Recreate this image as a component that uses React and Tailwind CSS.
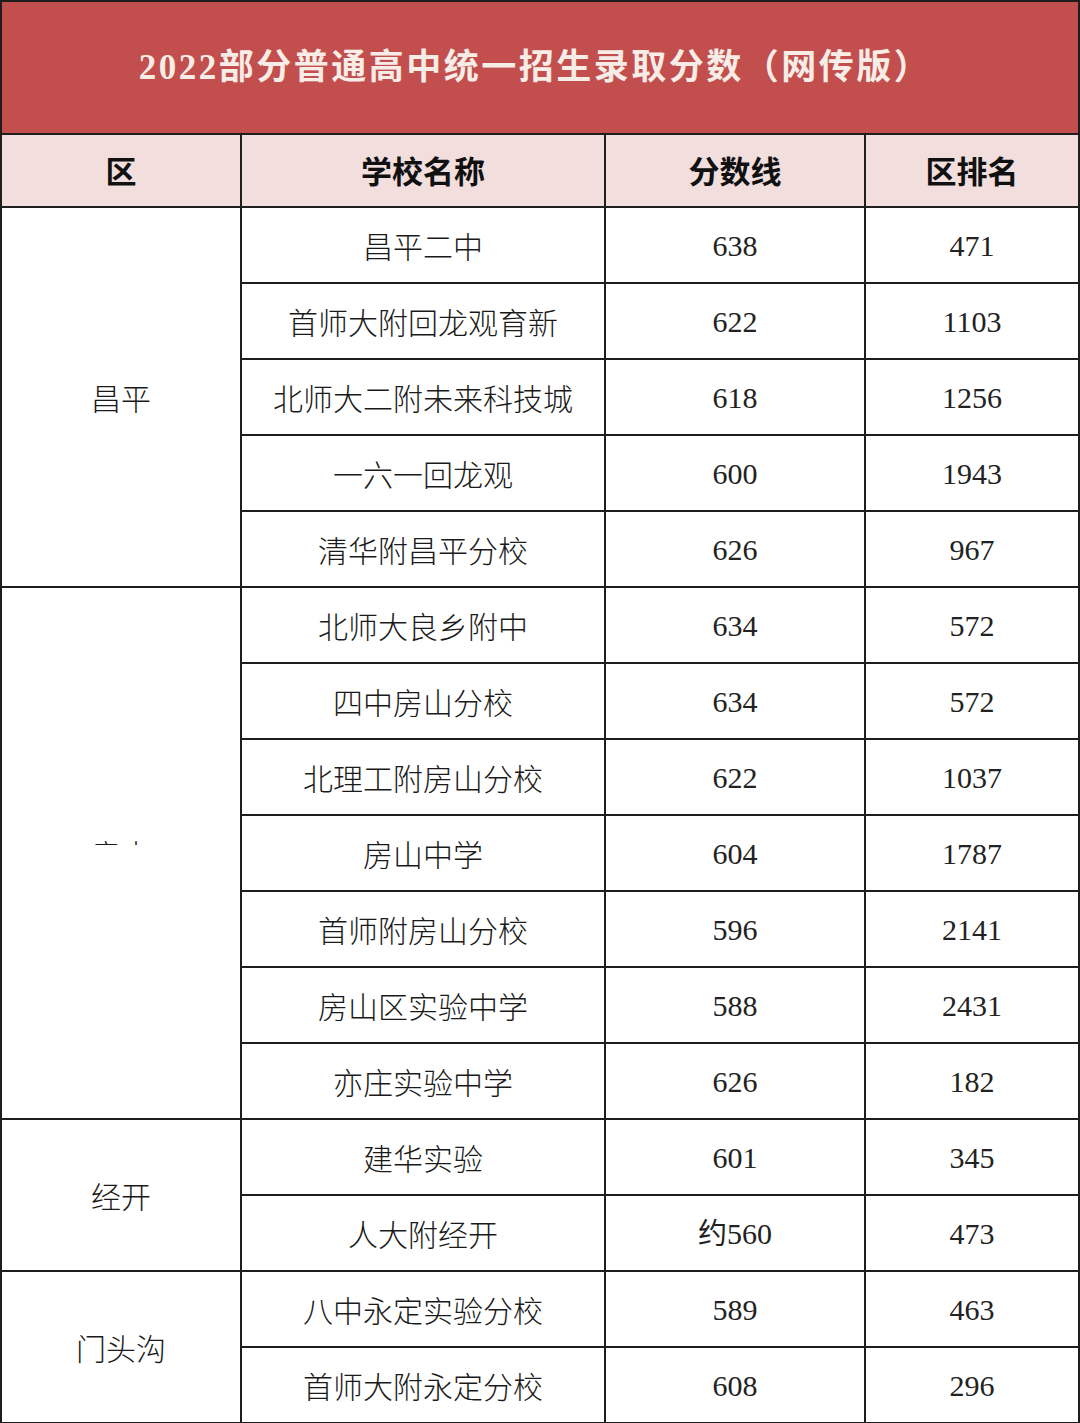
import React from 'react';

const groups = [
    {
        district: '昌平',
        rows: [
            ['昌平二中', '638', '471'],
            ['首师大附回龙观育新', '622', '1103'],
            ['北师大二附未来科技城', '618', '1256'],
            ['一六一回龙观', '600', '1943'],
            ['清华附昌平分校', '626', '967'],
        ],
    },
    {
        district: '房山',
        hidden: true,
        rows: [
            ['北师大良乡附中', '634', '572'],
            ['四中房山分校', '634', '572'],
            ['北理工附房山分校', '622', '1037'],
            ['房山中学', '604', '1787'],
            ['首师附房山分校', '596', '2141'],
            ['房山区实验中学', '588', '2431'],
            ['亦庄实验中学', '626', '182'],
        ],
    },
    {
        district: '经开',
        rows: [
            ['建华实验', '601', '345'],
            ['人大附经开', '约560', '473'],
        ],
    },
    {
        district: '门头沟',
        rows: [
            ['八中永定实验分校', '589', '463'],
            ['首师大附永定分校', '608', '296'],
        ],
    },
];

const cjk = { fontFamily: '"Noto Sans CJK SC", "Noto Sans", sans-serif' };
const num = { fontFamily: '"Liberation Serif", "Noto Sans CJK SC", serif' };

const cell = 'border-2 border-[#1e1e1e] text-center align-middle';

const App = () => {
    return (
        <div className="w-[1080px] h-[1423px] bg-white overflow-hidden">
            <table className="w-[1080px] table-fixed border-collapse">
                <colgroup>
                    <col className="w-[240px]" />
                    <col className="w-[364px]" />
                    <col className="w-[260px]" />
                    <col />
                </colgroup>
                <thead>
                    <tr className="h-[133px]">
                        <th colSpan={4} className={`${cell} bg-[#c24f4e] text-[#f7ece6] text-[35px] font-bold tracking-[2.5px] pb-[2px] pr-[10px]`} style={cjk}>
                            <span style={num}>2022</span>部分普通高中统一招生录取分数（网传版）
                        </th>
                    </tr>
                    <tr className="h-[73px] bg-[#f2dedd]">
                        {['区', '学校名称', '分数线', '区排名'].map(h => (
                            <th key={h} className={`${cell} text-[31px] font-bold text-[#111]`} style={cjk}>{h}</th>
                        ))}
                    </tr>
                </thead>
                <tbody>
                    {groups.map(g =>
                        g.rows.map((r, i) => (
                            <tr key={g.district + r[0]} className="h-[76px]">
                                {i === 0 && (
                                    <td rowSpan={g.rows.length} className={`${cell} text-[30px] text-[#1a1a1a] font-light`} style={cjk}>
                                        {g.hidden ? (
                                            <div className="relative inline-block">
                                                <span>{g.district}</span>
                                                {/* watermark patch that hides most of the label */}
                                                <div className="absolute left-[-40px] right-[-40px] top-[14px] bottom-[-20px] bg-white" />
                                            </div>
                                        ) : g.district}
                                    </td>
                                )}
                                <td className={`${cell} text-[30px] text-[#1a1a1a] font-light`} style={cjk}>{r[0]}</td>
                                <td className={`${cell} text-[30px] text-[#222]`} style={num}>
                                    {r[1].startsWith('约') ? (<><span className="text-[29px]" style={cjk}>约</span>{r[1].slice(1)}</>) : r[1]}
                                </td>
                                <td className={`${cell} text-[30px] text-[#222]`} style={num}>{r[2]}</td>
                            </tr>
                        ))
                    )}
                </tbody>
            </table>
        </div>
    );
};

export default App;
